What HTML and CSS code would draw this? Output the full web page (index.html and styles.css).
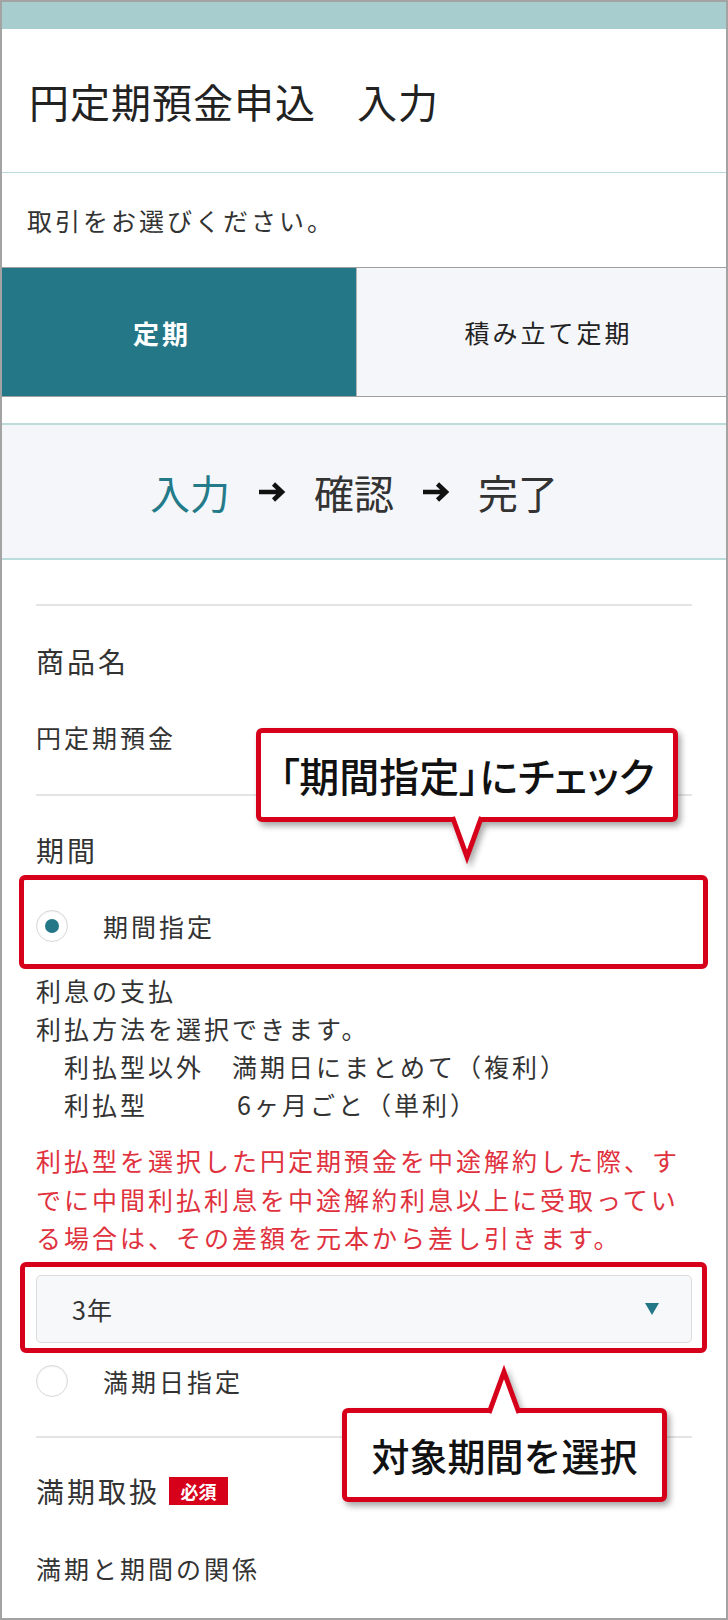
FILE: index.html
```html
<!DOCTYPE html>
<html lang="ja">
<head>
  <meta charset="UTF-8" />
  <meta name="viewport" content="width=device-width, initial-scale=1.0" />
  <title>円定期預金申込 入力</title>
  <link rel="stylesheet" href="styles.css">
</head>
<body>
  <div class="screen">
    <div class="topbar"></div>

    <h1 class="title">円定期預金申込　入力</h1>
    <p class="lead">取引をお選びください。</p>

    <div class="tabs">
      <div class="tab is-active">定期</div>
      <div class="tab">積み立て定期</div>
    </div>

    <div class="steps">
      <span class="step is-current">入力</span>
      <svg class="step-arrow" viewBox="0 0 28 20"><path d="M1 10 H24 M15.5 2 L24 10 L15.5 18" /></svg>
      <span class="step">確認</span>
      <svg class="step-arrow" viewBox="0 0 28 20"><path d="M1 10 H24 M15.5 2 L24 10 L15.5 18" /></svg>
      <span class="step">完了</span>
    </div>

    <div class="form">
      <div class="field">
        <div class="label">商品名</div>
        <div class="value">円定期預金</div>
      </div>

      <div class="field">
        <div class="label">期間</div>
        <label class="radio hl hl-radio"><span class="radio-mark is-checked"></span>期間指定</label>

        <div class="note">
          <div class="note-line">利息の支払</div>
          <div class="note-line">利払方法を選択できます。</div>
          <div class="note-table">
            <span>利払型以外</span><span>満期日にまとめて（複利）</span>
            <span>利払型</span><span class="pad">6ヶ月ごと（単利）</span>
          </div>
        </div>

        <p class="warn">利払型を選択した円定期預金を中途解約した際、すでに中間利払利息を中途解約利息以上に受取っている場合は、その差額を元本から差し引きます。</p>

        <div class="select hl hl-select">3年<span class="caret"></span></div>

        <label class="radio"><span class="radio-mark"></span>満期日指定</label>
      </div>

      <div class="field">
        <div class="label">満期取扱<span class="badge">必須</span></div>
        <div class="value">満期と期間の関係</div>
      </div>
    </div>

    <!-- annotations -->
    <div class="callout callout-check">
      「期間指定」にチェック
      <svg class="tail tail-down" viewBox="0 0 40 50" width="40" height="50"><path d="M5.5 0 L20 40 L34.5 0" /></svg>
    </div>
    <div class="callout callout-period">
      対象期間を選択
      <svg class="tail tail-up" viewBox="0 0 40 50" width="40" height="50"><path d="M5 50 L20 9 L35 50" /></svg>
    </div>
  </div>
</body>
</html>
```

FILE: styles.css
```css
body {
  margin: 0;
  background: #fff;
  font-family: "Noto Sans CJK JP", sans-serif;
  color: #333;
}

.screen {
  position: relative;
  width: 728px;
  height: 1620px;
  box-sizing: border-box;
  border: 2px solid #a3a3a3;
  overflow: hidden;
  background: #fff;
}

.topbar {
  height: 27px;
  background: #a7cdce;
}

.title {
  margin: 0;
  height: 143px;
  display: flex;
  align-items: center;
  padding-left: 27px;
  border-bottom: 1px solid #b9d9da;
  font-size: 40px;
  font-weight: 400;
  letter-spacing: 1px;
  color: #222;
}

.lead {
  margin: 0;
  height: 94px;
  display: flex;
  align-items: center;
  padding-left: 25px;
  font-size: 25px;
  letter-spacing: 3px;
  color: #333;
}

.tabs {
  display: flex;
  height: 130px;
  box-sizing: border-box;
  border-top: 1px solid #a0a0a0;
  border-bottom: 1px solid #a0a0a0;
}

.tab {
  display: flex;
  align-items: center;
  justify-content: center;
  flex: 1;
  padding-left: 14px;
  background: #f5f6f9;
  font-size: 25px;
  letter-spacing: 3px;
  color: #222;
  border-left: 1px solid #b5b5b5;
}

.tab.is-active {
  flex: 0 0 354px;
  box-sizing: border-box;
  padding: 0 34px 0 0;
  background: #247787;
  color: #fff;
  font-size: 26px;
  font-weight: 700;
  letter-spacing: 3px;
  border-left: none;
}

.steps {
  margin-top: 26px;
  height: 137px;
  box-sizing: border-box;
  border-top: 2px solid #bcdcdc;
  border-bottom: 2px solid #bcdcdc;
  background: #f5f6fa;
  display: flex;
  align-items: center;
  justify-content: center;
  gap: 28px;
  padding-right: 20px;
}

.step {
  font-size: 40px;
  line-height: 1;
  color: #333;
}

.step.is-current {
  color: #237a89;
}

.step-arrow {
  width: 28px;
  height: 20px;
}

.step-arrow path {
  fill: none;
  stroke: #111;
  stroke-width: 4.5;
}

.form {
  padding: 0 34px;
}

.field {
  border-top: 2px solid #e4e4e4;
}

.field:first-child {
  margin-top: 44px;
  padding: 35px 0 38px;
}

.field:nth-child(2) {
  padding: 34px 0 25px;
}

.field:nth-child(3) {
  padding-top: 33px;
}

.label {
  display: flex;
  align-items: center;
  height: 40px;
  font-size: 28px;
  letter-spacing: 3px;
  color: #333;
}

.value {
  margin-top: 37px;
  font-size: 25px;
  line-height: 38px;
  letter-spacing: 3px;
}

.field:nth-child(3) .value {
  margin-top: 38px;
}

.badge {
  display: inline-flex;
  align-items: center;
  justify-content: center;
  width: 59px;
  height: 28px;
  margin-left: 9px;
  background: #d7001b;
  color: #fff;
  font-size: 18px;
  font-weight: 700;
  letter-spacing: 0;
}

.radio {
  display: flex;
  align-items: center;
  height: 60px;
  margin-top: 26px;
  font-size: 25px;
  letter-spacing: 3px;
}

.radio-mark {
  position: relative;
  width: 32px;
  height: 32px;
  box-sizing: border-box;
  border: 1px solid #d8d8d8;
  border-radius: 50%;
  background: #fff;
  box-shadow: inset 0 1px 2px rgba(0, 0, 0, 0.06);
  margin-right: 35px;
  flex: none;
}

.radio-mark.is-checked::after {
  content: "";
  position: absolute;
  left: 8px;
  top: 8px;
  width: 14px;
  height: 14px;
  border-radius: 50%;
  background: #247787;
}

.note {
  margin-top: 15px;
  font-size: 25px;
  line-height: 38px;
  letter-spacing: 3px;
}

.note-table {
  display: grid;
  grid-template-columns: 168px auto;
  padding-left: 28px;
}

.note-table .pad {
  padding-left: 5px;
}

.warn {
  margin: 18px 0 0;
  font-size: 25px;
  line-height: 38.5px;
  letter-spacing: 3px;
  color: #e0323e;
}

.select {
  display: flex;
  align-items: center;
  height: 68px;
  margin-top: 18px;
  box-sizing: border-box;
  padding-left: 35px;
  border: 1px solid #dcdcdc;
  border-radius: 5px;
  background: #f7f8f9;
  font-size: 25px;
  letter-spacing: 1px;
  color: #333;
}

.caret {
  margin-left: auto;
  margin-right: 32px;
  width: 0;
  height: 0;
  border-left: 7px solid transparent;
  border-right: 7px solid transparent;
  border-top: 12px solid #247787;
}

.select + .radio {
  margin-top: 8px;
}

/* red highlight frames */
.hl {
  position: relative;
}

.hl::after {
  content: "";
  position: absolute;
  border: 5px solid #d7001b;
  border-radius: 6px;
  pointer-events: none;
}

.hl-radio::after {
  top: -21px;
  bottom: -13px;
  left: -17px;
  right: -16px;
}

.hl-select::after {
  top: -14px;
  bottom: -11px;
  left: -17px;
  right: -16px;
}

/* callouts */
.callout {
  position: absolute;
  box-sizing: border-box;
  height: 94px;
  display: flex;
  align-items: center;
  justify-content: center;
  background: #fff;
  border: 5px solid #d7001b;
  border-radius: 6px;
  color: #111;
  font-weight: 500;
  line-height: 1;
  filter: drop-shadow(3px 4px 3px rgba(0, 0, 0, 0.35));
}

.callout-check {
  left: 254px;
  top: 726px;
  width: 422px;
  font-size: 40px;
  font-feature-settings: "palt";
}

.callout-period {
  left: 340px;
  top: 1406px;
  width: 325px;
  font-size: 38px;
}

.tail {
  position: absolute;
  overflow: visible;
}

.tail path {
  fill: #fff;
  stroke: #d7001b;
  stroke-width: 5;
}

.tail-down {
  left: 186px;
  top: 84px;
}

.tail-up {
  left: 137px;
  top: -50px;
}
```
